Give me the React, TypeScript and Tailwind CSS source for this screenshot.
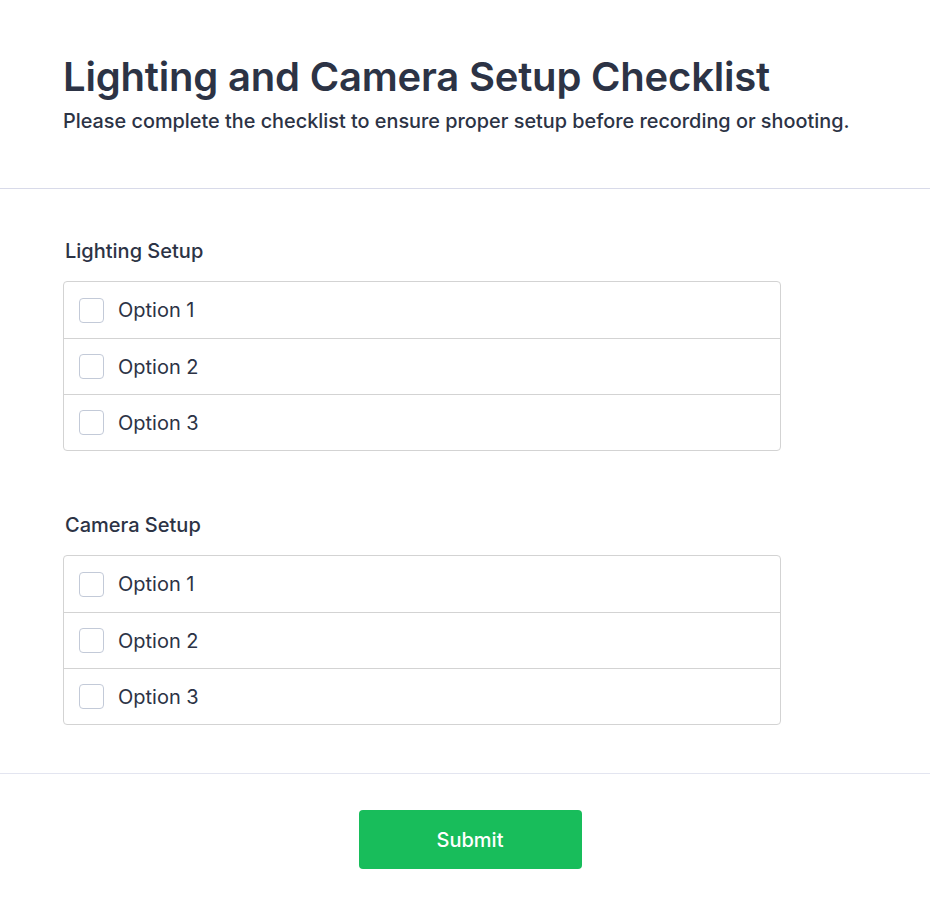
import React, { useState } from "react";

const sections = [
  { title: "Lighting Setup", options: ["Option 1", "Option 2", "Option 3"] },
  { title: "Camera Setup", options: ["Option 1", "Option 2", "Option 3"] },
];

function CheckGroup({ title, options }: { title: string; options: string[] }) {
  const [checked, setChecked] = useState<boolean[]>(options.map(() => false));

  return (
    <div>
      <div className="pl-[2px] text-[20px] font-medium leading-[28px] text-[#2c3345]">{title}</div>
      <div className="mt-[16px] w-[718px] rounded-[4px] border border-[#d3d3d3]">
        {options.map((opt, i) => (
          <label
            key={i}
            className={`flex h-[56px] cursor-pointer items-center gap-[14px] px-[15px] ${
              i > 0 ? "border-t border-[#d3d3d3]" : ""
            }`}
          >
            <input
              type="checkbox"
              checked={checked[i]}
              onChange={() => setChecked(checked.map((c, j) => (j === i ? !c : c)))}
              className="h-[25px] w-[25px] appearance-none rounded-[4px] border border-[#c3cad8] bg-white checked:bg-[#18bd5b]"
            />
            <span className="text-[20px] leading-[28px] text-[#2c3345]">{opt}</span>
          </label>
        ))}
      </div>
    </div>
  );
}

export default function App() {
  return (
    <div className="min-h-screen bg-white font-['Inter',sans-serif] text-[#2c3345]">
      {/* Header */}
      <header className="border-b border-[#d8dae9] px-[63px] pt-[53px] pb-[52px]">
        <h1 className="text-[40px] font-semibold leading-[48px] tracking-[-0.2px]">Lighting and Camera Setup Checklist</h1>
        <p className="mt-[5px] text-[19.85px] font-medium leading-[30px]">
          Please complete the checklist to ensure proper setup before recording or shooting.
        </p>
      </header>

      {/* Checklists */}
      <div className="flex flex-col gap-[60px] border-b border-[#e3e5f0] px-[63px] pt-[48px] pb-[48px]">
        {sections.map((s) => (
          <CheckGroup key={s.title} title={s.title} options={s.options} />
        ))}
      </div>

      {/* Submit */}
      <div className="flex justify-center pl-[10px] pt-[36px]">
        <button className="h-[59px] w-[223px] rounded-[4px] bg-[#18bd5b] text-[20px] font-medium text-white hover:bg-[#16a34f]">
          Submit
        </button>
      </div>
    </div>
  );
}
